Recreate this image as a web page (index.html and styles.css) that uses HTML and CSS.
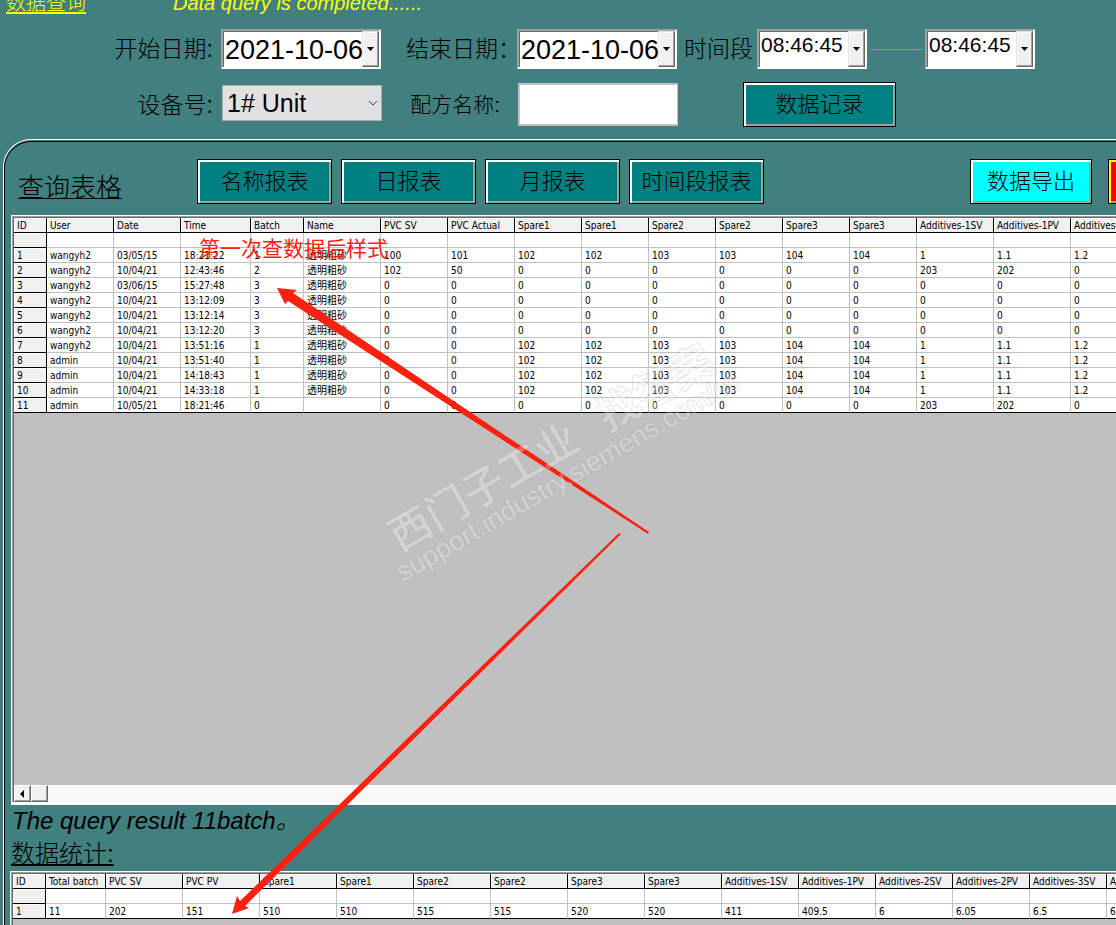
FILE: index.html
```html
<!DOCTYPE html>
<html lang="zh-CN">

<head>
    <meta charset="UTF-8">
    <meta name="viewport" content="width=device-width, initial-scale=1">
    <title>数据查询</title>
    <link rel="stylesheet" href="styles.css">
</head>

<body>

    <header class="topbar">
        <a class="page-title" href="#">数据查询</a>
        <span class="status">Data query is completed......</span>
    </header>

    <form class="filters">
        <label class="label" for="startDate">开始日期:</label>
        <div class="picker">
            <input type="text" id="startDate" value="2021-10-06">
            <button type="button" aria-label="选择开始日期"><svg width="8" height="4" viewBox="0 0 8 4"><path d="M0 0h7L3.5 4z"/></svg></button>
        </div>
        <label class="label label-end" for="endDate">结束日期：</label>
        <div class="picker">
            <input type="text" id="endDate" value="2021-10-06">
            <button type="button" aria-label="选择结束日期"><svg width="8" height="4" viewBox="0 0 8 4"><path d="M0 0h7L3.5 4z"/></svg></button>
        </div>
        <div class="time-range">
            <label for="startTime">时间段</label>
            <div class="picker picker-time">
                <input type="text" id="startTime" value="08:46:45">
                <button type="button" aria-label="选择开始时间"><svg width="8" height="4" viewBox="0 0 8 4"><path d="M0 0h7L3.5 4z"/></svg></button>
            </div>
            <span class="dash"></span>
            <div class="picker picker-time">
                <input type="text" id="endTime" value="08:46:45" aria-label="结束时间">
                <button type="button" aria-label="选择结束时间"><svg width="8" height="4" viewBox="0 0 8 4"><path d="M0 0h7L3.5 4z"/></svg></button>
            </div>
        </div>

        <label class="label" for="unit">设备号:</label>
        <div class="select-box">
            <select id="unit">
                <option>1# Unit</option>
            </select>
            <svg class="chevron" width="10" height="6" viewBox="0 0 10 6"><path d="M1 1l4 4 4-4" fill="none" stroke="#444"/></svg>
        </div>
        <label class="label label-recipe" for="recipe">配方名称:</label>
        <input type="text" class="recipe" id="recipe">
        <button type="button" class="btn btn-record">数据记录</button>
    </form>

    <div class="frame">
        <main class="frame-inner">
            <section class="query">
                <div class="toolbar">
                    <h2>查询表格</h2>
                    <div class="reports">
                        <button type="button" class="btn">名称报表</button>
                        <button type="button" class="btn">日报表</button>
                        <button type="button" class="btn">月报表</button>
                        <button type="button" class="btn">时间段报表</button>
                    </div>
                    <button type="button" class="btn btn-export">数据导出</button>
                    <button type="button" class="btn btn-stop" aria-label="退出"></button>
                </div>

                <div class="panel">
                    <div class="grid-body">
                        <table>
                            <colgroup>
                                <col class="c-id"><col class="c-mid"><col class="c-mid"><col class="c-time"><col class="c-batch"><col class="c-wide">
                                <col class="c-mid" span="8">
                                <col class="c-wide" span="3">
                            </colgroup>
                            <thead>
                                <tr><th>ID</th><th>User</th><th>Date</th><th>Time</th><th>Batch</th><th>Name</th><th>PVC SV</th><th>PVC Actual</th><th>Spare1</th><th>Spare1</th><th>Spare2</th><th>Spare2</th><th>Spare3</th><th>Spare3</th><th>Additives-1SV</th><th>Additives-1PV</th><th>Additives-2SV</th></tr>
                            </thead>
                            <tbody>
                                <tr><th></th><td></td><td></td><td></td><td></td><td></td><td></td><td></td><td></td><td></td><td></td><td></td><td></td><td></td><td></td><td></td><td></td></tr>
                                <tr><th>1</th><td>wangyh2</td><td>03/05/15</td><td>18:21:22</td><td>1</td><td>透明粗砂</td><td>100</td><td>101</td><td>102</td><td>102</td><td>103</td><td>103</td><td>104</td><td>104</td><td>1</td><td>1.1</td><td>1.2</td></tr>
                                <tr><th>2</th><td>wangyh2</td><td>10/04/21</td><td>12:43:46</td><td>2</td><td>透明粗砂</td><td>102</td><td>50</td><td>0</td><td>0</td><td>0</td><td>0</td><td>0</td><td>0</td><td>203</td><td>202</td><td>0</td></tr>
                                <tr><th>3</th><td>wangyh2</td><td>03/06/15</td><td>15:27:48</td><td>3</td><td>透明粗砂</td><td>0</td><td>0</td><td>0</td><td>0</td><td>0</td><td>0</td><td>0</td><td>0</td><td>0</td><td>0</td><td>0</td></tr>
                                <tr><th>4</th><td>wangyh2</td><td>10/04/21</td><td>13:12:09</td><td>3</td><td>透明粗砂</td><td>0</td><td>0</td><td>0</td><td>0</td><td>0</td><td>0</td><td>0</td><td>0</td><td>0</td><td>0</td><td>0</td></tr>
                                <tr><th>5</th><td>wangyh2</td><td>10/04/21</td><td>13:12:14</td><td>3</td><td>透明粗砂</td><td>0</td><td>0</td><td>0</td><td>0</td><td>0</td><td>0</td><td>0</td><td>0</td><td>0</td><td>0</td><td>0</td></tr>
                                <tr><th>6</th><td>wangyh2</td><td>10/04/21</td><td>13:12:20</td><td>3</td><td>透明粗砂</td><td>0</td><td>0</td><td>0</td><td>0</td><td>0</td><td>0</td><td>0</td><td>0</td><td>0</td><td>0</td><td>0</td></tr>
                                <tr><th>7</th><td>wangyh2</td><td>10/04/21</td><td>13:51:16</td><td>1</td><td>透明粗砂</td><td>0</td><td>0</td><td>102</td><td>102</td><td>103</td><td>103</td><td>104</td><td>104</td><td>1</td><td>1.1</td><td>1.2</td></tr>
                                <tr><th>8</th><td>admin</td><td>10/04/21</td><td>13:51:40</td><td>1</td><td>透明粗砂</td><td>0</td><td>0</td><td>102</td><td>102</td><td>103</td><td>103</td><td>104</td><td>104</td><td>1</td><td>1.1</td><td>1.2</td></tr>
                                <tr><th>9</th><td>admin</td><td>10/04/21</td><td>14:18:43</td><td>1</td><td>透明粗砂</td><td>0</td><td>0</td><td>102</td><td>102</td><td>103</td><td>103</td><td>104</td><td>104</td><td>1</td><td>1.1</td><td>1.2</td></tr>
                                <tr><th>10</th><td>admin</td><td>10/04/21</td><td>14:33:18</td><td>1</td><td>透明粗砂</td><td>0</td><td>0</td><td>102</td><td>102</td><td>103</td><td>103</td><td>104</td><td>104</td><td>1</td><td>1.1</td><td>1.2</td></tr>
                                <tr><th>11</th><td>admin</td><td>10/05/21</td><td>18:21:46</td><td>0</td><td></td><td>0</td><td>0</td><td>0</td><td>0</td><td>0</td><td>0</td><td>0</td><td>0</td><td>203</td><td>202</td><td>0</td></tr>
                            </tbody>
                        </table>
                    </div>
                    <div class="scrollbar">
                        <button type="button" class="scroll-btn" aria-label="向左滚动"><svg width="4" height="8" viewBox="0 0 4 8"><path d="M4 0v8L0 4z"/></svg></button>
                        <span class="scroll-btn"></span>
                    </div>
                </div>
            </section>

            <section class="stats">
                <p class="result">The query result 11batch。</p>
                <h2>数据统计:</h2>
                <div class="panel panel-stats">
                    <table>
                        <colgroup>
                            <col class="c-id"><col class="c-total">
                            <col class="c-wide" span="14">
                        </colgroup>
                        <thead>
                            <tr><th>ID</th><th>Total batch</th><th>PVC SV</th><th>PVC PV</th><th>Spare1</th><th>Spare1</th><th>Spare2</th><th>Spare2</th><th>Spare3</th><th>Spare3</th><th>Additives-1SV</th><th>Additives-1PV</th><th>Additives-2SV</th><th>Additives-2PV</th><th>Additives-3SV</th><th>Additives-3PV</th></tr>
                        </thead>
                        <tbody>
                            <tr><th></th><td></td><td></td><td></td><td></td><td></td><td></td><td></td><td></td><td></td><td></td><td></td><td></td><td></td><td></td><td></td></tr>
                            <tr><th>1</th><td>11</td><td>202</td><td>151</td><td>510</td><td>510</td><td>515</td><td>515</td><td>520</td><td>520</td><td>411</td><td>409.5</td><td>6</td><td>6.05</td><td>6.5</td><td>6.6</td></tr>
                        </tbody>
                    </table>
                </div>
            </section>
        </main>
    </div>

    <!-- notes and watermark drawn over the page -->
    <svg class="overlay" width="1116" height="925" viewBox="0 0 1116 925">
        <text class="note" x="199" y="256">第一次查数据后样式</text>
        <g class="arrows">
            <path d="M277 288L297 290L293 293L649 532L648 534L288 301L285 304z"/>
            <path d="M232 914L237 896L240 901L619 533L621 534L245 906L249 908z"/>
        </g>
        <g class="watermark" transform="translate(403 582) rotate(-30)">
            <text class="mark-cn" x="12" y="-27">西门子工业</text>
            <text class="mark-cn" x="252" y="-27">找答案</text>
            <text class="mark-url" x="0" y="0">support.industry.siemens.com/cs</text>
        </g>
    </svg>

</body>

</html>
```

FILE: styles.css
```css
* {
    box-sizing: border-box;
}

body {
    margin: 0;
    height: 100vh;
    position: relative;
    overflow: hidden;
    background: #427f7f;
    color: #000;
    font-family: "Liberation Sans", "Noto Sans CJK SC", sans-serif;
    font-weight: 300;
}

button,
input,
select {
    font-family: inherit;
    font-weight: inherit;
    color: inherit;
    border-radius: 0;
    margin: 0;
}

.topbar {
    display: flex;
    align-items: center;
    gap: 87px;
    height: 22px;
    margin-top: -8px;
    padding-left: 6px;
    font-size: 20px;
    line-height: 22px;
    color: #ff0;
}

.page-title {
    color: #ff0;
    text-underline-offset: 2px;
}

.status {
    font-style: italic;
}

/* filters */
.filters {
    display: grid;
    grid-template-columns: 221px 160px 136px 160px 1fr;
    grid-template-rows: 40px 45px;
    row-gap: 13px;
    align-items: center;
    padding-top: 15px;
    font-size: 23px;
    white-space: nowrap;
}

.label {
    padding: 0 8px 4px 0;
    text-align: right;
}

.label-end {
    padding: 0 0 4px 25px;
    text-align: left;
}

.label-recipe {
    padding-right: 17px;
    font-size: 21px;
}

.picker {
    display: flex;
    height: 40px;
    background: #fff;
    border: 2px solid;
    border-color: #a0a0a0 #fff #fff #a0a0a0;
    box-shadow: inset 1px 1px 0 #696969;
}

.picker input {
    flex: 1;
    min-width: 0;
    padding: 2px 0 0 2px;
    border: none;
    background: none;
    font-size: 27px;
    outline: none;
}

.picker button {
    display: flex;
    align-items: center;
    justify-content: center;
    width: 17px;
    padding: 0;
    background: #f0f0f0;
    border: 1px solid;
    border-color: #e3e3e3 #696969 #696969 #e3e3e3;
    box-shadow: inset -1px -1px 0 #a0a0a0, inset 1px 1px 0 #fff;
}

.time-range {
    display: flex;
    align-items: center;
    padding-left: 7px;
}

.picker-time {
    width: 110px;
}

.time-range label {
    margin-right: 4px;
    padding-bottom: 4px;
}

.picker-time input {
    padding: 0 0 8px 2px;
    font-size: 21px;
}

.dash {
    width: 53px;
    height: 1px;
    margin: 0 1px 0 4px;
    background: #20e020;
}

.select-box {
    display: grid;
    align-items: center;
    padding: 0 0 4px 1px;
}

.select-box select,
.chevron {
    grid-area: 1 / 1;
}

.select-box select {
    appearance: none;
    width: 160px;
    height: 36px;
    padding: 0 0 0 4px;
    border: 1px solid #adadad;
    background: #e1e1e1;
    font-size: 25px;
}

.chevron {
    justify-self: end;
    margin-right: 4px;
    pointer-events: none;
}

.recipe {
    height: 43px;
    width: 160px;
    margin-left: 1px;
    border: 2px solid #c0c0c0;
    border-right-width: 1px;
    background: #fff;
}

.btn {
    flex: none;
    width: 135px;
    height: 45px;
    padding: 0 0 5px;
    border: 1px solid #000;
    background: #008080;
    box-shadow: inset 2px 2px 0 #fff, inset -2px -2px 0 #a0a0a0;
    font-size: 22px;
}

.btn-record {
    width: 153px;
    margin-left: 66px;
}

/* rounded frame: white line outside, black line inside */
.frame {
    margin: 12px 0 0 3px;
    padding-top: 1px;
    border: solid #fff;
    border-width: 1px 0 0 1px;
    border-top-left-radius: 28px;
}

.frame-inner {
    padding-top: 17px;
    border: solid #000;
    border-width: 1px 0 0 1px;
    border-top-left-radius: 27px;
}

h2 {
    margin: 0;
    font-weight: 300;
    text-decoration: underline;
    text-decoration-thickness: 1px;
}

.query {
    padding-left: 6px;
}

.toolbar {
    display: flex;
    align-items: center;
    height: 45px;
    margin-bottom: 11px;
}

.toolbar h2 {
    width: 186px;
    padding: 12px 0 0 7px;
    font-size: 26px;
    line-height: 34px;
    text-underline-offset: 1px;
}

.reports {
    display: flex;
    gap: 9px;
}

.btn-export {
    width: 122px;
    margin-left: auto;
    background: #0ff;
}

.btn-stop {
    margin: 0 -127px 0 16px;
    background: #f00;
    box-shadow: inset 2px 2px 0 #ff0, inset -2px -2px 0 #a0a0a0;
}

/* tables */
.panel {
    overflow: hidden;
    background: #c0c0c0;
    border: solid #fff;
    border-width: 1px 0 3px 1px;
    padding: 2px 0 0 2px;
    box-shadow: inset 1px 1px 0 #a0a0a0, inset 2px 2px 0 #696969;
}

.grid-body {
    height: 567px;
}

table {
    table-layout: fixed;
    width: 100%;
    border-spacing: 0;
    font-family: "DejaVu Sans Condensed", "Noto Sans CJK SC", sans-serif;
    font-size: 10px;
    font-weight: 400;
    line-height: 12px;
    white-space: nowrap;
}

.c-id {
    width: 33px;
}

.c-mid {
    width: 67px;
}

.c-time {
    width: 70px;
}

.c-batch {
    width: 53px;
}

.c-wide {
    width: 77px;
}

.c-total {
    width: 60px;
}

th,
td {
    height: 15px;
    padding: 2px 3px 0;
    overflow: hidden;
    text-align: left;
    font-weight: 400;
    background: #fff;
    border: solid #c0c0c0;
    border-width: 0 1px 1px 0;
}

th {
    background: #f0f0f0;
    border-color: #000;
    box-shadow: inset 1px 1px 0 #fff;
}

tbody tr:last-child td {
    border-bottom-color: #000;
}

.scrollbar {
    display: flex;
    height: 17px;
    background: #f8f8f8;
}

.scroll-btn {
    display: flex;
    align-items: center;
    justify-content: center;
    width: 17px;
    padding: 0 2px 0 0;
    background: #f0f0f0;
    border: 1px solid;
    border-color: #fff #696969 #696969 #fff;
    box-shadow: inset -1px -1px 0 #a0a0a0;
}

.stats {
    padding-left: 5px;
}

.result {
    margin: 0;
    padding-left: 2px;
    font-size: 24px;
    font-style: italic;
    line-height: 32px;
}

.stats h2 {
    padding-left: 1px;
    font-size: 24px;
    line-height: 34px;
    text-underline-offset: 2px;
    text-decoration-thickness: 2px;
}

.panel-stats {
    height: 200px;
}

.overlay {
    position: absolute;
    top: 0;
    left: 0;
    pointer-events: none;
}

.note {
    font-size: 21px;
    font-weight: 400;
    fill: #ff2010;
}

.arrows {
    fill: #ff2010;
}

/* grey edge behind a white fill, so it also shows on white cells */
.watermark {
    fill: #fff;
    stroke: #aaa;
    stroke-width: 2px;
    paint-order: stroke;
    opacity: 0.3;
    font-weight: 500;
}

.mark-cn {
    font-size: 42px;
}

.mark-url {
    font-size: 27px;
}
```
